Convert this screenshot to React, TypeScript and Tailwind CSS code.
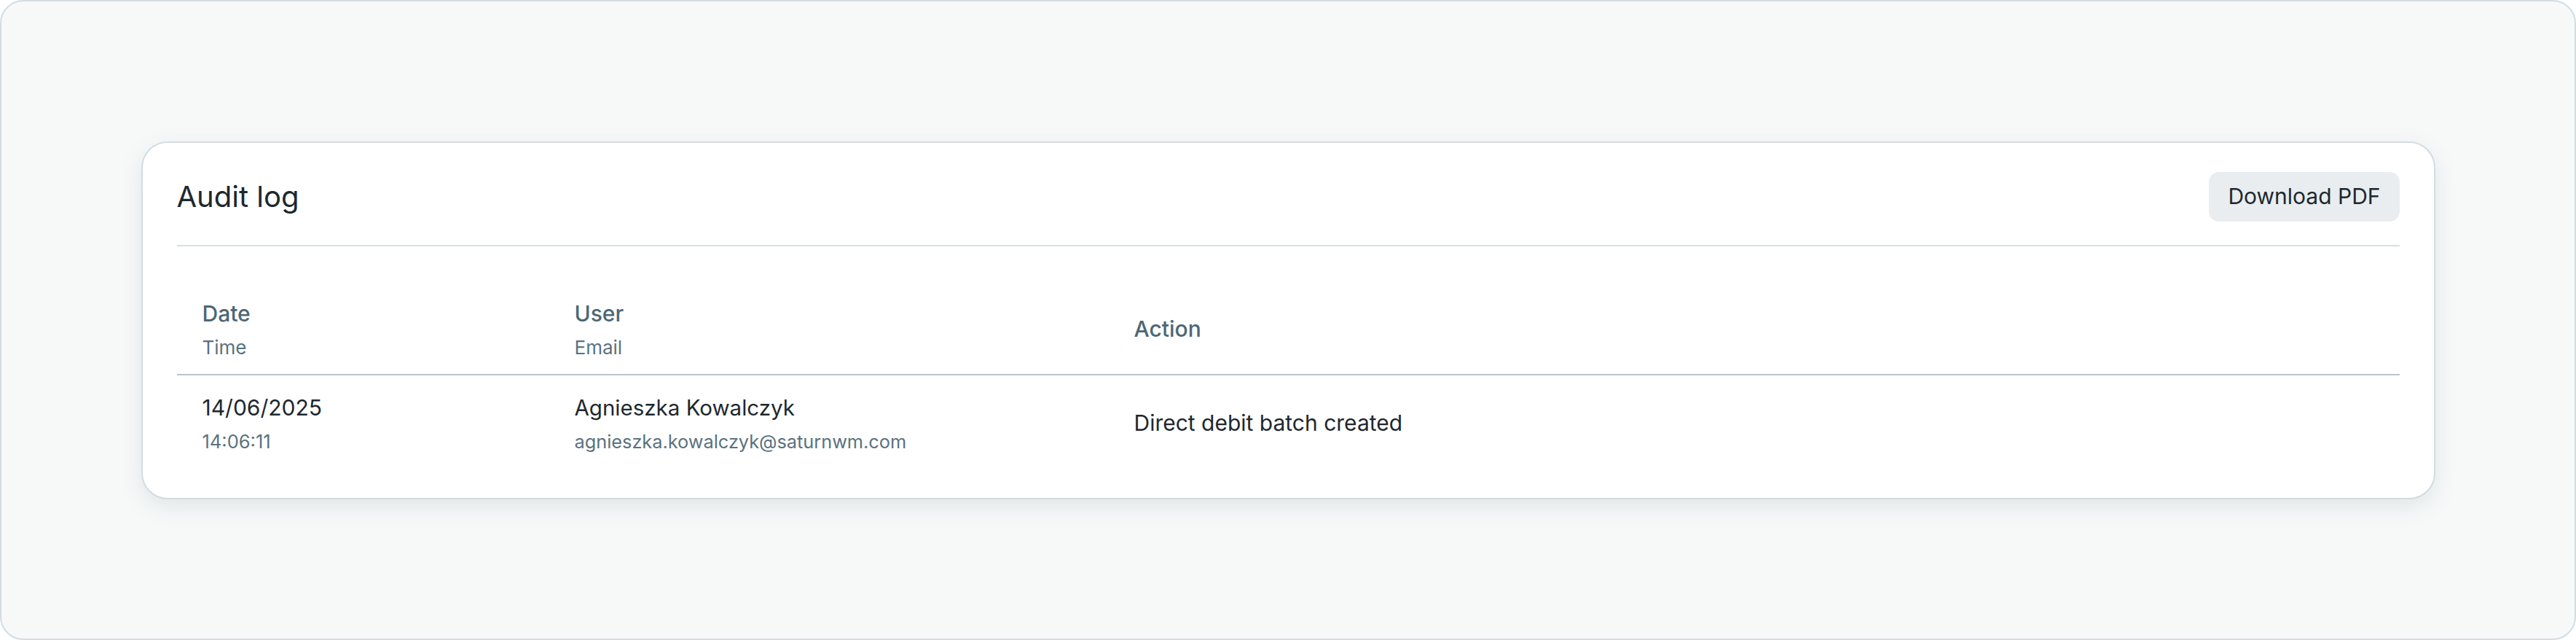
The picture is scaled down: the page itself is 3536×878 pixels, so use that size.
const rows = [
  {
    date: "14/06/2025",
    time: "14:06:11",
    name: "Agnieszka Kowalczyk",
    email: "agnieszka.kowalczyk@saturnwm.com",
    action: "Direct debit batch created",
  },
];

export default function App() {
  return (
    <div
      className="w-[3536px] h-[878px] flex items-center justify-center bg-[#f7f9f9] border-2 border-[#d3dce0] rounded-[32px]"
      style={{ fontFamily: "Inter, 'Noto Sans', sans-serif" }}
    >
      <div className="w-[3149px] h-[491px] bg-white border-2 border-[#d3dce0] rounded-[36px] shadow-[0_10px_32px_rgba(40,60,75,0.10)] px-[47px] pt-[40px]">
        <div className="flex items-center justify-between pb-[32px] border-b-2 border-[#d8dfe3]">
          <h1 className="text-[40px] leading-[56px] font-normal text-[#1e282f]">Audit log</h1>
          <button className="h-[68px] px-[26px] rounded-[14px] bg-[#e9edf0] text-[30px] text-[#1e282f]">
            Download PDF
          </button>
        </div>

        <table className="w-full mt-[46px] border-collapse text-left">
          <thead>
            <tr className="border-b-2 border-[#b8c5cd]">
              <th className="w-[511px] pl-[35px] pt-[24px] pb-[18px] font-normal align-middle">
                <div className="text-[30px] leading-[45px] font-medium text-[#4d6775]">Date</div>
                <div className="mt-[6px] text-[26px] leading-[36px] text-[#5a7280]">Time</div>
              </th>
              <th className="w-[768px] pl-[35px] pt-[24px] pb-[18px] font-normal align-middle">
                <div className="text-[30px] leading-[45px] font-medium text-[#4d6775]">User</div>
                <div className="mt-[6px] text-[26px] leading-[36px] text-[#5a7280]">Email</div>
              </th>
              <th className="pl-[35px] pt-[24px] pb-[18px] align-middle text-[30px] leading-[45px] font-medium text-[#4d6775]">
                Action
              </th>
            </tr>
          </thead>
          <tbody>
            {rows.map((r) => (
              <tr key={r.email}>
                <td className="pl-[35px] pt-[22px] pb-[20px] align-middle">
                  <div className="text-[30px] leading-[45px] text-[#1e282f]">{r.date}</div>
                  <div className="mt-[6px] text-[25.5px] leading-[36px] text-[#5a7280]">{r.time}</div>
                </td>
                <td className="pl-[35px] pt-[22px] pb-[20px] align-middle">
                  <div className="text-[29.5px] leading-[45px] text-[#1e282f]">{r.name}</div>
                  <div className="mt-[6px] text-[25.3px] leading-[36px] text-[#5a7280]">{r.email}</div>
                </td>
                <td className="pl-[35px] pt-[22px] pb-[20px] align-middle text-[30px] leading-[45px] text-[#1e282f]">
                  {r.action}
                </td>
              </tr>
            ))}
          </tbody>
        </table>
      </div>
    </div>
  );
}
